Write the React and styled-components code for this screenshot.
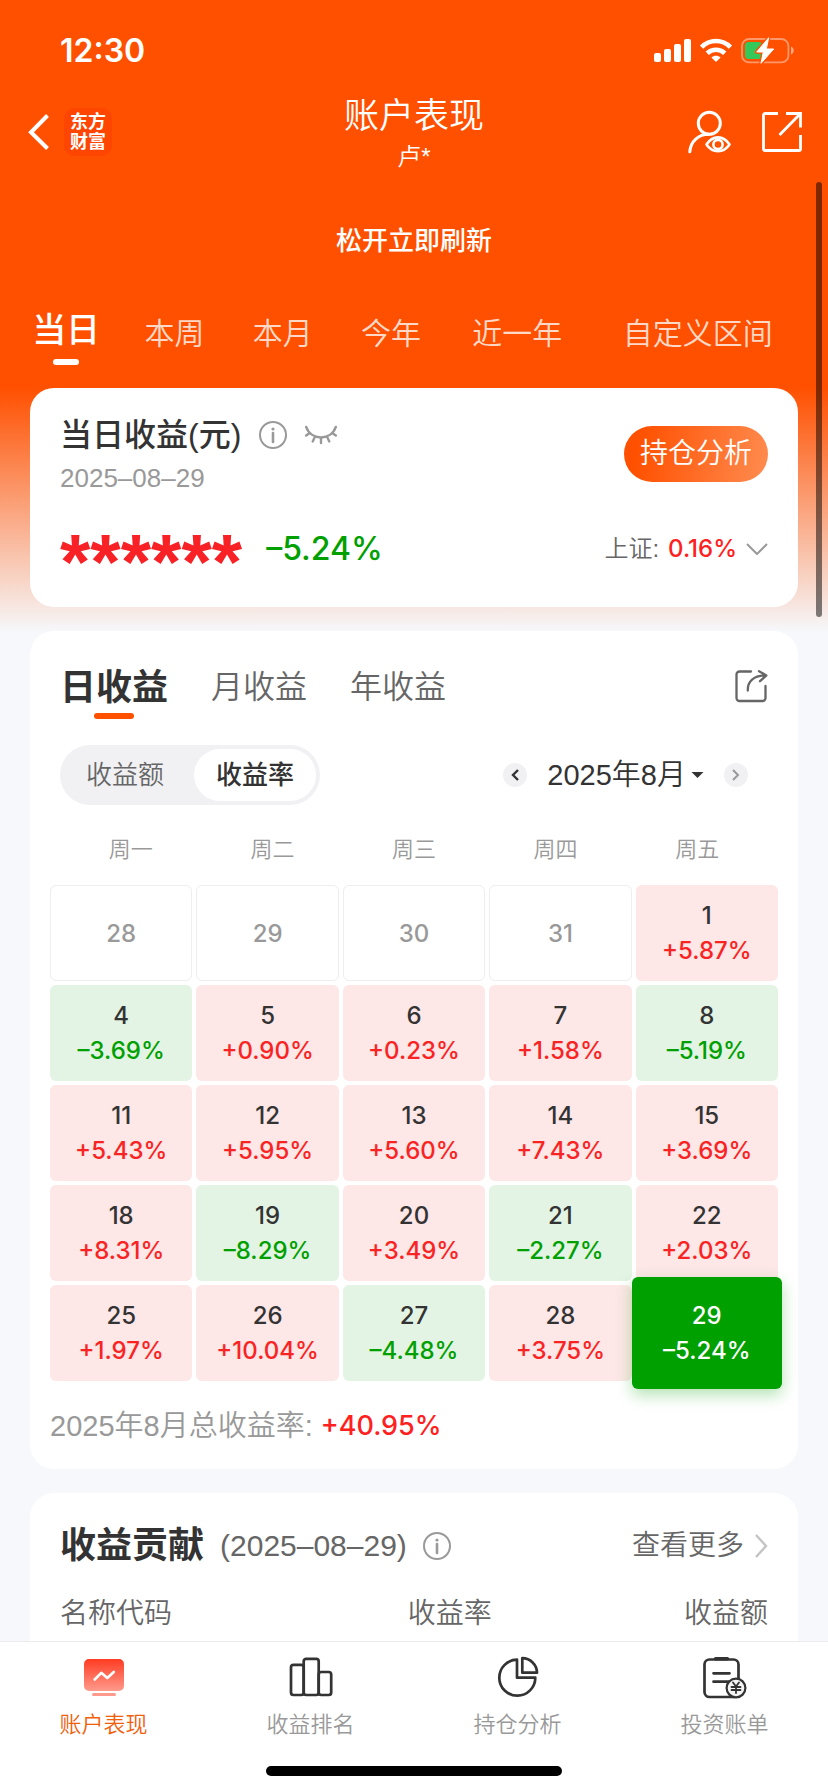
import styled, { createGlobalStyle } from "styled-components";

const sans = `"Liberation Sans", "Noto Sans CJK SC", sans-serif`;
const numeric = `Inter, "Noto Sans CJK SC", sans-serif`;

const GlobalStyle = createGlobalStyle`
    * {
        box-sizing: border-box;
    }
    body {
        margin: 0;
        font-family: ${sans};
        font-weight: 350;
        color: #333;
        background-color: #f6f8fb;
    }
    button {
        padding: 0;
        border: none;
        background: none;
        color: inherit;
        font: inherit;
        cursor: pointer;
    }
    a {
        color: inherit;
        text-decoration: none;
    }
    svg {
        display: block;
        flex-shrink: 0;
    }
`;

const Screen = styled.div`
    position: relative;
    height: 100vh;
    display: flex;
    flex-direction: column;
    background: linear-gradient(#ff5000 388px, #f6f8fb 632px);
`;
const StatusBar = styled.div`
    height: 88px;
    flex-shrink: 0;
    padding: 12px 34px 0 60px;
    display: flex;
    align-items: center;
    justify-content: space-between;
    color: white;
`;
const Time = styled.time`
    font-family: ${numeric};
    font-size: 32px;
    font-weight: 600;
`;
const StatusIcons = styled.div`
    display: flex;
    align-items: center;
    gap: 9px;
`;
const Header = styled.header`
    height: 88px;
    flex-shrink: 0;
    padding: 0 26px;
    display: grid;
    grid-template-columns: 1fr auto 1fr;
    align-items: center;
    color: white;
`;
const HeaderLeft = styled.div`
    display: flex;
    align-items: center;
    gap: 14px;
`;
const Logo = styled.a`
    width: 48px;
    height: 48px;
    border-radius: 10px;
    background-color: #ff4600;
    display: grid;
    place-content: center;
    font-size: 18px;
    line-height: 20px;
    font-weight: 700;
    text-align: center;
`;
const HeaderCenter = styled.div`
    padding-top: 4px;
    text-align: center;
`;
const PageTitle = styled.h1`
    margin: 0;
    font-size: 35px;
    line-height: 46px;
    font-weight: 350;
`;
const Account = styled.p`
    margin: 0;
    font-size: 24px;
    line-height: 36px;
`;
const HeaderRight = styled.div`
    display: flex;
    justify-content: flex-end;
    gap: 30px;
`;
const Main = styled.main`
    flex: 1;
    min-height: 0;
    overflow-y: auto;
    scrollbar-width: none;
`;
const RefreshHint = styled.p`
    margin: 0;
    padding-top: 2px;
    font-size: 26px;
    line-height: 126px;
    font-weight: 500;
    text-align: center;
    color: white;
`;
const PeriodTabs = styled.nav`
    height: 84px;
    padding: 8px 22px 0 12px;
    display: grid;
    grid-template-columns: 3fr 3fr 3fr 3fr 4fr 6fr;
    align-items: start;
`;
const PeriodTab = styled.button`
    display: flex;
    flex-direction: column;
    align-items: center;
    gap: 11px;
    color: ${props => props.$active ? "white" : "rgba(255, 255, 255, 0.8)"};
    font-size: ${props => props.$active ? "34px" : "30px"};
    line-height: ${props => props.$active ? "36px" : "44px"};
    font-weight: ${props => props.$active ? 500 : 350};
`;
const Underline = styled.span`
    width: ${props => props.$wide ? "40px" : "26px"};
    height: 6px;
    border-radius: 3px;
    background-color: ${props => props.$color};
`;
const Cards = styled.div`
    padding: 0 30px;
    display: flex;
    flex-direction: column;
    gap: 24px;
`;
const Card = styled.section`
    border-radius: 24px;
    background-color: white;
`;
const SummaryCard = styled(Card)`
    padding: 27px 30px 34px;
`;
const Row = styled.div`
    display: flex;
    align-items: center;
    justify-content: space-between;
`;
const SummaryTitle = styled.h2`
    margin: 0;
    display: flex;
    align-items: center;
    gap: 18px;
    font-size: 32px;
    line-height: 40px;
    font-weight: 500;
`;
const SummaryDate = styled.p`
    margin: 8px 0 0;
    font-size: 26px;
    line-height: 30px;
    color: #999;
`;
const AnalyseButton = styled.button`
    width: 144px;
    height: 56px;
    border-radius: 28px;
    background: linear-gradient(100deg, #ff5000 10%, #ff8c50);
    color: white;
    font-size: 28px;
    line-height: 56px;
`;
const SummaryValues = styled(Row)`
    margin-top: 32px;
    height: 48px;
`;
const Amounts = styled.div`
    display: flex;
    align-items: center;
    gap: 24px;
`;
const HiddenAmount = styled.span`
    height: 48px;
    font-size: 78px;
    line-height: 74px;
    font-weight: 700;
    color: #f82125;
`;
const DayRate = styled.span`
    font-family: ${numeric};
    font-size: 32px;
    line-height: 44px;
    font-weight: 500;
    color: #00a000;
`;
const IndexButton = styled.button`
    display: flex;
    align-items: center;
    gap: 9px;
    font-size: 24px;
    line-height: 36px;
    color: #666;
`;
const IndexRate = styled.span`
    font-family: ${numeric};
    font-size: 24px;
    font-weight: 500;
    color: #ff2020;
`;
const CalendarCard = styled(Card)`
    padding: 34px 20px 25px;
`;
const CardHead = styled(Row)`
    padding: 0 10px;
    align-items: flex-start;
`;
const RangeTabs = styled.div`
    display: flex;
    gap: 43px;
`;
const RangeTab = styled.button`
    display: flex;
    flex-direction: column;
    align-items: center;
    gap: 3px;
    line-height: 45px;
    font-size: ${props => props.$active ? "36px" : "32px"};
    font-weight: ${props => props.$active ? 700 : 350};
    color: ${props => props.$active ? "#333" : "#666"};
`;
const ShareButton = styled.button`
    margin-top: 5px;
`;
const CalendarTools = styled(Row)`
    margin-top: 26px;
    padding: 0 30px 0 10px;
`;
const Switch = styled.div`
    padding: 4px;
    border-radius: 30px;
    background-color: #f1f1f4;
    display: flex;
    gap: 8px;
`;
const SwitchOption = styled.button`
    width: 122px;
    height: 52px;
    border-radius: 26px;
    font-size: 26px;
    line-height: 52px;
    color: ${props => props.$active ? "#333" : "#666"};
    font-weight: ${props => props.$active ? 500 : 350};
    background-color: ${props => props.$active ? "white" : "transparent"};
`;
const MonthPicker = styled.div`
    display: flex;
    align-items: center;
    gap: 20px;
`;
const RoundButton = styled.button`
    width: 24px;
    height: 24px;
    border-radius: 50%;
    background-color: #f1f1f4;
    color: ${props => props.disabled ? "#999" : "#333"};
    display: grid;
    place-items: center;
`;
const MonthButton = styled.button`
    display: flex;
    align-items: center;
    gap: 5px;
    font-size: 29px;
    line-height: 36px;
`;
const Weekdays = styled.div`
    margin-top: 30px;
    padding: 0 10px;
    display: grid;
    grid-template-columns: repeat(5, 1fr);
    font-size: 22px;
    line-height: 30px;
    text-align: center;
    color: #999;
`;
const Days = styled.div`
    margin-top: 20px;
    display: grid;
    grid-template-columns: repeat(5, 1fr);
    grid-auto-rows: 96px;
    gap: 4px;
`;
const tones = {
    none: { back: "white", rate: "#999" },
    up: { back: "#fde7e7", rate: "#fa2323" },
    down: { back: "#e3f4e4", rate: "#00a000" },
};
const Day = styled.button`
    border-radius: 6px;
    border: ${props => props.$tone === "none" ? "1px solid #eee" : "none"};
    background-color: ${props => tones[props.$tone].back};
    color: ${props => props.$tone === "none" ? "#999" : "#333"};
    display: flex;
    flex-direction: column;
    align-items: center;
    justify-content: center;
    font-family: ${numeric};
    font-size: 24px;
    line-height: 35px;
    font-weight: 500;
`;
const SelectedDay = styled(Day)`
    margin: -8px -4px;
    z-index: 1;
    background-color: #00a000;
    color: white;
    box-shadow: 0 6px 16px rgba(0, 160, 0, 0.3);
`;
const Rate = styled.span`
    color: ${props => props.$selected ? "white" : tones[props.$tone].rate};
`;
const Total = styled.p`
    margin: 27px 0 0;
    display: flex;
    gap: 8px;
    font-size: 29px;
    line-height: 36px;
    color: #999;
`;
const TotalRate = styled.span`
    font-family: ${numeric};
    font-size: 27px;
    font-weight: 500;
    color: #ff2020;
`;
const ContributionCard = styled(Card)`
    padding: 31px 30px 40px;
`;
const ContributionTitle = styled.div`
    display: flex;
    align-items: center;
    gap: 16px;
    font-size: 30px;
    line-height: 44px;
    color: #666;
`;
const Heading = styled.h2`
    margin: 0;
    font-size: 36px;
    font-weight: 700;
    color: #333;
`;
const MoreLink = styled.a`
    display: flex;
    align-items: center;
    gap: 11px;
    font-size: 28px;
    line-height: 44px;
    color: #666;
`;
const Table = styled.table`
    width: 100%;
    margin-top: 26px;
    border-collapse: collapse;
    font-size: 28px;
    line-height: 40px;
    color: #666;
`;
const Th = styled.th`
    padding: 0;
    width: ${props => props.$width};
    font-weight: 350;
    text-align: ${props => props.$align || "right"};
`;
const BottomBar = styled.footer`
    flex-shrink: 0;
    padding: 14px 0 16px;
    border-top: 1px solid #ebebeb;
    background-color: white;
`;
const BottomTabs = styled.nav`
    display: grid;
    grid-template-columns: repeat(4, 1fr);
`;
const BottomTab = styled.a`
    display: flex;
    flex-direction: column;
    align-items: center;
    gap: 10px;
    font-size: 22px;
    line-height: 30px;
    color: ${props => props.$active ? "#f0600c" : "#999"};
`;
const HomeIndicator = styled.div`
    width: 296px;
    height: 10px;
    margin: 26px auto 0;
    border-radius: 5px;
    background-color: black;
`;
const ScrollThumb = styled.div`
    position: absolute;
    top: 182px;
    right: 6px;
    width: 6px;
    height: 435px;
    border-radius: 3px;
    background-color: rgba(0, 0, 0, 0.5);
`;

const SignalIcon = () => (
    <svg width="37" height="25" viewBox="0 0 37 25" fill="currentColor">
        <rect x="0" y="15" width="7" height="9" rx="2" />
        <rect x="10" y="11" width="7" height="13" rx="2" />
        <rect x="20" y="6" width="7" height="18" rx="2" />
        <rect x="30" y="1" width="7" height="23" rx="2" />
    </svg>
);

const WifiIcon = () => (
    <svg width="32" height="25" viewBox="0 0 32 25" fill="none" stroke="currentColor" strokeWidth="4.6">
        <path d="M1.6 9.2C9.6 1 22.4 1 30.4 9.2" />
        <path d="M7.2 15.2c5-4.7 12.6-4.7 17.6 0" />
        <path d="M16 24l-4.6-4.6c2.6-2.2 6.6-2.2 9.2 0z" fill="currentColor" stroke="none" />
    </svg>
);

const BatteryIcon = () => (
    <svg width="53" height="27" viewBox="0 0 53 27">
        <rect x="1" y="2" width="46.4" height="23.4" rx="7" fill="none" stroke="white" strokeOpacity="0.42" strokeWidth="1.8" />
        <path d="M50 9.5c3.6 1.2 3.6 6.8 0 8z" fill="white" fillOpacity="0.5" />
        <rect x="4" y="5" width="17" height="17" rx="3.5" fill="#34c759" />
        <path d="M27.7.7 15.7 15h6.6L20 26.3 32.7 12h-7.4z" fill="white" stroke="#ff5000" strokeWidth="3.6" strokeLinejoin="round" />
        <path d="M27.7.7 15.7 15h6.6L20 26.3 32.7 12h-7.4z" fill="white" stroke="white" strokeWidth="1" strokeLinejoin="round" />
    </svg>
);

const BackIcon = () => (
    <svg width="24" height="38" viewBox="0 0 24 38" fill="none" stroke="currentColor" strokeWidth="4">
        <path d="M21.5 2.5 5 19.3l16.5 16.2" />
    </svg>
);

const VisitorIcon = () => (
    <svg width="44" height="44" viewBox="0 0 44 44" fill="none" stroke="currentColor" strokeWidth="3" strokeLinecap="round">
        <circle cx="21.3" cy="13.3" r="11" />
        <path d="M1.8 41.8C2.5 31.5 10.5 24.2 21 24.3" />
        <path d="M18.5 34.5C24.5 25 35.5 25 41.5 34.5c-6 9-17 9-23 0z" strokeWidth="2.6" strokeLinejoin="round" />
        <circle cx="30" cy="34.5" r="4.6" strokeWidth="2.6" />
    </svg>
);

const OpenIcon = () => (
    <svg width="40" height="44" viewBox="0 -2 40 44" fill="none" stroke="currentColor" strokeWidth="2.8">
        <path d="M16 1.5H3A1.5 1.5 0 0 0 1.5 3v34A1.5 1.5 0 0 0 3 38.5h34a1.5 1.5 0 0 0 1.5-1.5V23" />
        <path d="M24 1.5h14.5V15.5M38 2 17.5 23" />
    </svg>
);

const InfoIcon = () => (
    <svg width="28" height="28" viewBox="0 0 28 28" fill="none" stroke="#999" strokeWidth="2">
        <circle cx="14" cy="14" r="13" />
        <path d="M14 12v9" strokeWidth="2.6" strokeLinecap="round" />
        <circle cx="14" cy="8" r="1.6" fill="#999" stroke="none" />
    </svg>
);

const ClosedEyeIcon = () => (
    <svg width="32" height="22" viewBox="0 0 32 22" fill="none" stroke="#999" strokeWidth="2.4" strokeLinecap="round">
        <path d="M1.2 3c5 14 24.6 14 29.6 0" />
        <path d="M4 9.5 1.2 11.5M9.6 13.5 7.7 17.5M16 14.5V19M22.4 13.5l1.9 4M28 9.5l2.8 2" />
    </svg>
);

const ShareIcon = () => (
    <svg width="33" height="33" viewBox="0 0 33 33" fill="none" stroke="#666" strokeWidth="2.3" strokeLinecap="round" strokeLinejoin="round">
        <path d="M16 1.5H4.5a3 3 0 0 0-3 3v23.5a3 3 0 0 0 3 3h23a3 3 0 0 0 3-3V16" />
        <path d="M12.8 20.5C12.5 11.5 18.5 5.5 31 5.4M24 1.2l7.4 4.2L25 11.2" />
    </svg>
);

const Chevron = ({ width, height, d, color = "currentColor", weight = 2 }) => (
    <svg width={width} height={height} viewBox={`0 0 ${width} ${height}`} fill="none" stroke={color} strokeWidth={weight}>
        <path d={d} />
    </svg>
);

const PerformanceIcon = () => (
    <svg width="44" height="44" viewBox="-2 -2 44 44" fill="none">
        <defs>
            <linearGradient id="performance" x1="0" y1="0" x2="0" y2="1">
                <stop offset="0" stopColor="#ff3b22" />
                <stop offset="1" stopColor="#ff9a8c" />
            </linearGradient>
        </defs>
        <rect x="0" y="1" width="40" height="32" rx="5" fill="url(#performance)" />
        <path d="M10.7 21.5l6.6-6.7 6 5.2 6.5-6" stroke="white" strokeWidth="2.6" strokeLinecap="round" strokeLinejoin="round" />
        <rect x="8" y="35" width="24" height="3" rx="1.5" fill="#ff9a8c" />
    </svg>
);

const RankIcon = () => (
    <svg width="44" height="44" viewBox="-1 -1 44 44" fill="none" stroke="#333" strokeWidth="2.7">
        <rect x="1" y="7.8" width="12.7" height="30.2" rx="2.5" />
        <rect x="13.7" y="1.8" width="15" height="36.2" rx="2.5" />
        <rect x="28.7" y="15" width="12.5" height="23" rx="2.5" />
    </svg>
);

const PieIcon = () => (
    <svg width="44" height="44" viewBox="-2 -1 44 44" fill="none" stroke="#333" strokeWidth="2.7" strokeLinejoin="round">
        <path d="M19 2.7A18 18 0 1 0 37.3 20.7H19z" />
        <path d="M24.3 1.2A14.7 14.7 0 0 1 39 15.7H24.3z" />
    </svg>
);

const BillIcon = () => (
    <svg width="44" height="44" viewBox="0 -1 44 44" fill="none" stroke="#333" strokeWidth="2.7" strokeLinecap="round">
        <rect x="1.5" y="2.5" width="34" height="37.5" rx="5" />
        <path d="M12.5 1.8h12" strokeWidth="3.4" />
        <path d="M10.5 16.3h16M10.5 24.7h15" />
        <circle cx="33" cy="31" r="9.4" fill="#f4f4f4" strokeWidth="2.2" />
        <path d="M30 25.5l3 4 3-4M33 29.5v6.5M28.5 30h9M28.5 33h9" strokeWidth="1.8" />
    </svg>
);

const periods = ["当日", "本周", "本月", "今年", "近一年", "自定义区间"];
const ranges = ["日收益", "月收益", "年收益"];
const weekdays = ["周一", "周二", "周三", "周四", "周五"];

const days = [
    [28], [29], [30], [31], [1, "+5.87%"],
    [4, "–3.69%"], [5, "+0.90%"], [6, "+0.23%"], [7, "+1.58%"], [8, "–5.19%"],
    [11, "+5.43%"], [12, "+5.95%"], [13, "+5.60%"], [14, "+7.43%"], [15, "+3.69%"],
    [18, "+8.31%"], [19, "–8.29%"], [20, "+3.49%"], [21, "–2.27%"], [22, "+2.03%"],
    [25, "+1.97%"], [26, "+10.04%"], [27, "–4.48%"], [28, "+3.75%"], [29, "–5.24%"],
];

const bottomTabs = [
    { label: "账户表现", Icon: PerformanceIcon },
    { label: "收益排名", Icon: RankIcon },
    { label: "持仓分析", Icon: PieIcon },
    { label: "投资账单", Icon: BillIcon },
];

const getTone = (rate) => {
    if (!rate) return "none";
    return rate.startsWith("+") ? "up" : "down";
};

const Calendar = () => (
    <CalendarCard>
        <CardHead>
            <RangeTabs>
                {ranges.map((range, i) => (
                    <RangeTab key={range} $active={i === 0}>
                        {range}
                        {i === 0 && <Underline $wide $color="#ff5000" />}
                    </RangeTab>
                ))}
            </RangeTabs>
            <ShareButton aria-label="分享"><ShareIcon /></ShareButton>
        </CardHead>
        <CalendarTools>
            <Switch>
                <SwitchOption>收益额</SwitchOption>
                <SwitchOption $active>收益率</SwitchOption>
            </Switch>
            <MonthPicker>
                <RoundButton aria-label="上个月">
                    <Chevron width={8} height={12} d="M7 1 2 6l5 5" weight={2.4} />
                </RoundButton>
                <MonthButton>
                    2025年8月
                    <svg width="13" height="8" viewBox="0 0 13 8" fill="#333"><path d="M.5 1h12l-6 6z" /></svg>
                </MonthButton>
                <RoundButton aria-label="下个月" disabled>
                    <Chevron width={8} height={12} d="M1 1l5 5-5 5" />
                </RoundButton>
            </MonthPicker>
        </CalendarTools>
        <Weekdays>
            {weekdays.map(day => <span key={day}>{day}</span>)}
        </Weekdays>
        <Days>
            {days.map(([day, rate], i) => {
                const selected = i === days.length - 1;
                const Cell = selected ? SelectedDay : Day;
                const tone = getTone(rate);
                return (
                    <Cell key={i} $tone={tone}>
                        <span>{day}</span>
                        {rate && <Rate $tone={tone} $selected={selected}>{rate}</Rate>}
                    </Cell>
                );
            })}
        </Days>
        <Total>
            2025年8月总收益率:
            <TotalRate>+40.95%</TotalRate>
        </Total>
    </CalendarCard>
);

const App = () => {
    return (
        <Screen>
            <GlobalStyle />
            <StatusBar>
                <Time>12:30</Time>
                <StatusIcons>
                    <SignalIcon />
                    <WifiIcon />
                    <BatteryIcon />
                </StatusIcons>
            </StatusBar>
            <Header>
                <HeaderLeft>
                    <button aria-label="返回"><BackIcon /></button>
                    <Logo href="#">东方<br />财富</Logo>
                </HeaderLeft>
                <HeaderCenter>
                    <PageTitle>账户表现</PageTitle>
                    <Account>卢*</Account>
                </HeaderCenter>
                <HeaderRight>
                    <button aria-label="访客"><VisitorIcon /></button>
                    <button aria-label="打开"><OpenIcon /></button>
                </HeaderRight>
            </Header>
            <Main>
                <RefreshHint>松开立即刷新</RefreshHint>
                <PeriodTabs>
                    {periods.map((period, i) => (
                        <PeriodTab key={period} $active={i === 0}>
                            {period}
                            {i === 0 && <Underline $color="white" />}
                        </PeriodTab>
                    ))}
                </PeriodTabs>
                <Cards>
                    <SummaryCard>
                        <Row>
                            <div>
                                <SummaryTitle>
                                    当日收益(元)
                                    <InfoIcon />
                                    <button aria-label="显示金额"><ClosedEyeIcon /></button>
                                </SummaryTitle>
                                <SummaryDate>2025–08–29</SummaryDate>
                            </div>
                            <AnalyseButton>持仓分析</AnalyseButton>
                        </Row>
                        <SummaryValues>
                            <Amounts>
                                <HiddenAmount>******</HiddenAmount>
                                <DayRate>–5.24%</DayRate>
                            </Amounts>
                            <IndexButton>
                                上证:
                                <IndexRate>0.16%</IndexRate>
                                <Chevron width={22} height={12} d="M1 1l10 10L21 1" color="#999" />
                            </IndexButton>
                        </SummaryValues>
                    </SummaryCard>
                    <Calendar />
                    <ContributionCard>
                        <Row>
                            <ContributionTitle>
                                <Heading>收益贡献</Heading>
                                <span>(2025–08–29)</span>
                                <InfoIcon />
                            </ContributionTitle>
                            <MoreLink href="#">
                                查看更多
                                <Chevron width={13} height={24} d="M1 1l10 11L1 23" color="#c4c4c4" weight={2.4} />
                            </MoreLink>
                        </Row>
                        <Table>
                            <thead>
                                <tr>
                                    <Th $align="left" $width="40%">名称代码</Th>
                                    <Th $width="21%">收益率</Th>
                                    <Th>收益额</Th>
                                </tr>
                            </thead>
                        </Table>
                    </ContributionCard>
                </Cards>
            </Main>
            <BottomBar>
                <BottomTabs>
                    {bottomTabs.map(({ label, Icon }, i) => (
                        <BottomTab key={label} href="#" $active={i === 0}>
                            <Icon />
                            {label}
                        </BottomTab>
                    ))}
                </BottomTabs>
                <HomeIndicator />
            </BottomBar>
            <ScrollThumb />
        </Screen>
    );
};

export default App;
